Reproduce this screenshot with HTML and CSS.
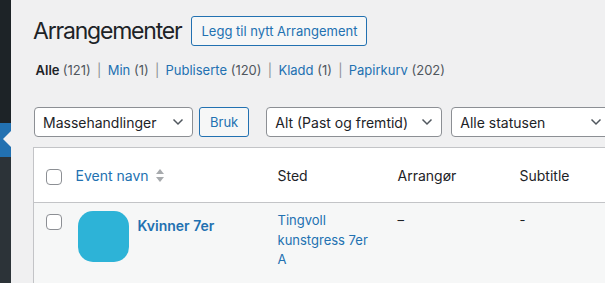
FILE: index.html
```html
<!DOCTYPE html>
<html lang="no">
<head>
    <meta charset="UTF-8">
    <meta name="viewport" content="width=device-width, initial-scale=1.0">
    <title>Arrangementer</title>
    <link rel="stylesheet" href="styles.css">
</head>
<body>

    <!-- Admin menu (collapsed edge) -->
    <div class="sidebar">
        <div class="menu-top"></div>
        <div class="menu-current"><span class="menu-arrow"></span></div>
        <div class="menu-rest"></div>
    </div>

    <div class="wrap">
        <!-- Page heading -->
        <div class="page-head">
            <h1>Arrangementer</h1>
            <a href="#" class="button">Legg til nytt Arrangement</a>
        </div>

        <ul class="subsubsub">
            <li><a href="#" class="current">Alle <span class="count">(121)</span></a> |</li>
            <li><a href="#">Min <span class="count">(1)</span></a> |</li>
            <li><a href="#">Publiserte <span class="count">(120)</span></a> |</li>
            <li><a href="#">Kladd <span class="count">(1)</span></a> |</li>
            <li><a href="#">Papirkurv <span class="count">(202)</span></a></li>
        </ul>

        <!-- Filters -->
        <div class="tablenav">
            <div class="select bulk">
                <span>Massehandlinger</span>
                <svg class="chevron" viewBox="0 0 12 8" width="12" height="8"><path d="M1.5 1.5 6 6l4.5-4.5" /></svg>
            </div>
            <a href="#" class="button small">Bruk</a>
            <div class="select period">
                <span>Alt (Past og fremtid)</span>
                <svg class="chevron" viewBox="0 0 12 8" width="12" height="8"><path d="M1.5 1.5 6 6l4.5-4.5" /></svg>
            </div>
            <div class="select status">
                <span>Alle statusen</span>
                <svg class="chevron" viewBox="0 0 12 8" width="12" height="8"><path d="M1.5 1.5 6 6l4.5-4.5" /></svg>
            </div>
        </div>

        <table class="widefat">
            <colgroup>
                <col class="col-check">
                <col class="col-name">
                <col class="col-place">
                <col class="col-org">
                <col class="col-sub">
            </colgroup>
            <thead>
                <tr>
                    <th class="check"><span class="checkbox"></span></th>
                    <th class="sortable">
                        <a href="#">Event navn</a>
                        <svg class="sort" viewBox="0 0 8 13" width="8" height="13">
                            <path d="M0 5 4 0l4 5z" />
                            <path d="M0 8h8l-4 5z" />
                        </svg>
                    </th>
                    <th>Sted</th>
                    <th>Arrangør</th>
                    <th>Subtitle</th>
                </tr>
            </thead>
            <tbody>
                <tr class="alternate">
                    <td class="check"><span class="checkbox"></span></td>
                    <td>
                        <div class="event">
                            <span class="thumb"></span>
                            <a href="#" class="row-title">Kvinner 7er</a>
                        </div>
                    </td>
                    <td><a href="#">Tingvoll kunstgress 7er A</a></td>
                    <td>–</td>
                    <td>-</td>
                </tr>
            </tbody>
        </table>
    </div>

</body>
</html>
```

FILE: styles.css
```css
/* styles.css */

body {
    font-family: Inter, "Noto Sans", sans-serif;
    font-size: 13px;
    color: #1d2327;
    background-color: #f0f0f1;
    margin: 0;
    padding: 0;
    display: flex;
    height: 283px;
    overflow: hidden;
}

a {
    color: #2271b1;
    text-decoration: none;
}

/* Sidebar edge */
.sidebar {
    width: 11px;
    flex-shrink: 0;
    display: flex;
    flex-direction: column;
}

.menu-top {
    height: 123px;
    background-color: #1d2327;
}

.menu-current {
    height: 34px;
    background-color: #2271b1;
    position: relative;
}

.menu-arrow {
    position: absolute;
    right: 0;
    top: 8px;
    width: 0;
    height: 0;
    border-top: 8.5px solid transparent;
    border-bottom: 8.5px solid transparent;
    border-right: 8px solid #f0f0f1;
}

.menu-rest {
    flex: 1;
    background-color: #2c3338;
}

/* Content */
.wrap {
    padding-left: 22px;
    width: 720px;
    flex-shrink: 0;
}

.page-head {
    display: flex;
    align-items: center;
    margin-top: 16px;
    height: 30px;
}

.page-head h1 {
    font-size: 23px;
    font-weight: 400;
    line-height: 30px;
    margin: 0 10px 0 0;
    letter-spacing: -1.2px;
}

.button {
    display: inline-flex;
    align-items: center;
    height: 28px;
    padding: 0 9px;
    border: 1px solid #2271b1;
    border-radius: 3px;
    background-color: #f6f7f7;
    color: #2271b1;
    font-size: 13px;
}

.subsubsub {
    list-style: none;
    margin: 14px 0 0 0;
    padding: 0;
    display: flex;
    line-height: 20px;
    color: #8c8f94;
}

.subsubsub li {
    white-space: pre;
}

.subsubsub li + li::before {
    content: ' ';
}

.subsubsub a {
    padding: 0 0.2em;
}

.subsubsub .current {
    color: #1d2327;
    font-weight: 600;
}

.subsubsub .count {
    color: #50575e;
    font-weight: 400;
}

/* Filters */
.tablenav {
    display: flex;
    align-items: center;
    margin: 27px 0 0 1px;
    height: 30px;
}

.select {
    display: flex;
    align-items: center;
    justify-content: space-between;
    box-sizing: border-box;
    height: 30px;
    padding: 0 8px 0 8px;
    border: 1px solid #8c8f94;
    border-radius: 4px;
    background-color: #fff;
    font-size: 14px;
}

.chevron {
    fill: none;
    stroke: #50575e;
    stroke-width: 1.5;
}

.bulk {
    width: 159px;
}

.period {
    width: 176px;
    margin-left: 17px;
}

.status {
    width: 160px;
    margin-left: 9px;
}

.button.small {
    margin-left: 6px;
    height: 28px;
    padding: 0 10px;
}

/* Table */
.widefat {
    margin-top: 10px;
    width: 700px;
    border: 1px solid #c3c4c7;
    border-collapse: collapse;
    table-layout: fixed;
    background-color: #fff;
}

.col-check { width: 34px; }
.col-name { width: 200px; }
.col-place { width: 120px; }
.col-org { width: 122px; }

th {
    height: 54px;
    padding: 0 10px;
    text-align: left;
    font-size: 14px;
    font-weight: 400;
    border-bottom: 1px solid #c3c4c7;
}

th.check,
td.check {
    padding: 0 0 0 12px;
}

th.check .checkbox {
    margin-top: 3px;
}

th.sortable {
    padding-left: 8px;
}

.sort {
    fill: #a7aaad;
    margin-left: 4px;
    vertical-align: -1px;
}

.checkbox {
    display: block;
    box-sizing: border-box;
    width: 16px;
    height: 16px;
    border: 1px solid #8c8f94;
    border-radius: 4px;
    background-color: #fff;
}

td {
    vertical-align: top;
    padding: 8px 10px 30px;
    line-height: 19.5px;
}

td.check {
    padding-top: 11px;
}

.alternate {
    background-color: #f6f7f7;
}

.event {
    display: flex;
    align-items: flex-start;
    gap: 9px;
}

.thumb {
    width: 51px;
    height: 51px;
    border-radius: 15px;
    background-color: #2db3d7;
    flex-shrink: 0;
}

.row-title {
    font-size: 14px;
    font-weight: 600;
    line-height: 20px;
    margin-top: 5px;
}
```
